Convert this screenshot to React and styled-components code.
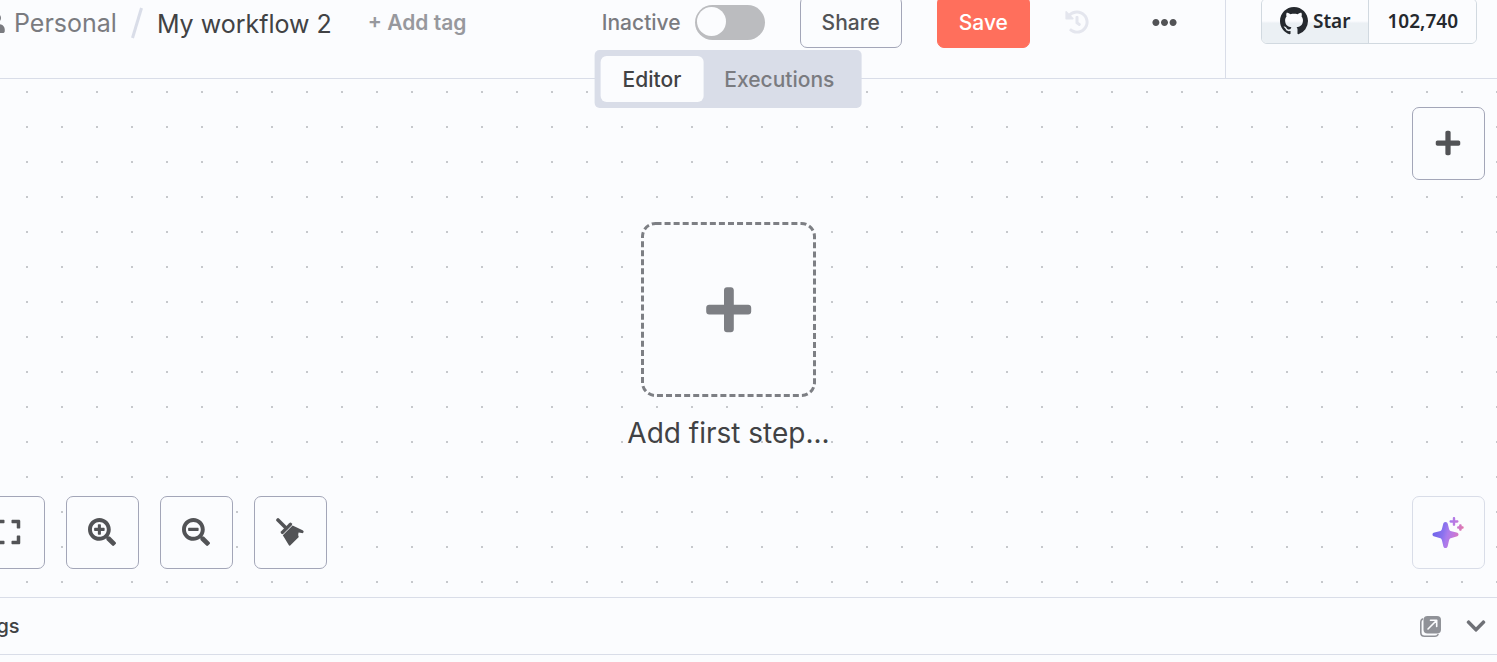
import React from 'react';
import styled, { createGlobalStyle } from 'styled-components';
import {
  FaChevronDown,
  FaEllipsisH,
  FaExpand,
  FaHistory,
  FaPlus,
  FaSearchMinus,
  FaSearchPlus,
  FaUser,
} from 'react-icons/fa';

const GlobalStyle = createGlobalStyle`
  *, *::before, *::after { box-sizing: border-box; }
  body {
    margin: 0;
    overflow-x: hidden;
    background: #fbfcfe;
    color: #414244;
    font-family: Inter, "Liberation Sans", sans-serif;
  }
  button, input { font: inherit; margin: 0; }
  svg { display: block; flex: none; }
`;

const Viewport = styled.div`
  overflow: hidden;
`;

/* The workspace runs on past the left edge of the window. */
const Workspace = styled.div`
  display: flex;
  flex-direction: column;
  min-height: 100vh;
  margin-left: -41px;
  padding-bottom: 7px;
`;

const Header = styled.header`
  position: relative;
  display: flex;
  border-bottom: 1px solid #d9dde8;
`;

const HeaderMain = styled.div`
  flex: 1;
  display: flex;
  align-items: center;
  height: 78px;
  padding: 0 48px 34px 27px;
  border-right: 1px solid #d9dde8;
  white-space: nowrap;
`;

const HeaderAside = styled.div`
  display: flex;
  align-items: flex-end;
  height: 78px;
  padding: 0 20px 34px 35px;
`;

const Crumbs = styled.nav`
  display: flex;
  align-items: center;
  padding-top: 2px;
  font-size: 25px;
  line-height: 32px;
`;

const CrumbLink = styled.a`
  display: flex;
  align-items: center;
  gap: 8px;
  color: #7a7b80;
  text-decoration: none;
`;

const Slash = styled.svg`
  margin: 0 14px;
`;

const WorkflowName = styled.h1`
  margin: 0;
  padding-top: 2px;
  font-size: 25px;
  line-height: 32px;
  font-weight: 400;
`;

const PlainButton = styled.button`
  display: flex;
  align-items: center;
  justify-content: center;
  padding: 0;
  border: 0;
  background: none;
  color: ${(p) => p.$color};
  cursor: pointer;
`;

const AddTag = styled(PlainButton)`
  margin-left: 36px;
  padding-top: 2px;
  font-size: 21px;
  line-height: 28px;
  font-weight: 600;
`;

const Actions = styled.div`
  display: flex;
  align-items: center;
  gap: 35px;
  margin-left: auto;
`;

const ActiveLabel = styled.label`
  display: flex;
  align-items: center;
  gap: 14px;
  color: #7a7b80;
  font-size: 21px;
  line-height: 28px;
  font-weight: 500;
`;

const LabelText = styled.span`
  padding-top: 2px;
`;

const Switch = styled.input`
  appearance: none;
  width: 70px;
  height: 35px;
  border-radius: 18px;
  background: #bbbcbf;
  padding: 2px;
  cursor: pointer;

  &::before {
    content: '';
    display: block;
    width: 29px;
    height: 29px;
    border-radius: 50%;
    background: #fbfcfe;
  }
`;

const Button = styled.button`
  height: 52px;
  padding: 2px 21px 0;
  border: 1px solid ${(p) => (p.$primary ? '#ff6f5c' : '#a3a6b8')};
  border-radius: 7px;
  background: ${(p) => (p.$primary ? '#ff6f5c' : '#fbfcfe')};
  color: ${(p) => (p.$primary ? '#ffffff' : '#525356')};
  font-size: 21px;
  line-height: 28px;
  font-weight: 500;
  cursor: pointer;
`;

const MenuButton = styled(PlainButton)`
  margin-left: 28px;
`;

const Tabs = styled.div`
  position: absolute;
  top: 50px;
  left: 50%;
  transform: translateX(-50%);
  display: flex;
  padding: 6px;
  border-radius: 5px;
  background: #d9dde8;
`;

const Tab = styled.button`
  height: 46px;
  padding: 2px ${(p) => (p.$active ? 22 : 21)}px 0;
  border: 0;
  border-radius: 6px;
  background: ${(p) => (p.$active ? '#fbfcfe' : 'transparent')};
  color: ${(p) => (p.$active ? '#414244' : '#7a7b80')};
  font-size: 21px;
  line-height: 28px;
  font-weight: 500;
  cursor: pointer;
`;

const Stars = styled.div`
  display: flex;
  height: 46px;
  border: 1px solid #d1d9e0;
  border-radius: 6px;
  overflow: hidden;
  font-family: "Noto Sans", "Open Sans", sans-serif;
  font-size: 19px;
  line-height: 28px;
  font-weight: 600;
`;

const StarLink = styled.a`
  display: flex;
  align-items: center;
  gap: 5px;
  padding: 0 18px;
  background: ${(p) => (p.$count ? '#fbfcfe' : 'linear-gradient(#fbfcfe 50%, #ebf0f4 55%)')};
  border-left: ${(p) => (p.$count ? '1px solid #d1d9e0' : '0')};
  color: #25292e;
  text-decoration: none;
`;

const Canvas = styled.main`
  flex: 1;
  display: flex;
  flex-direction: column;
  justify-content: space-between;
  padding: 28px 12px 28px 13px;
  background-image: conic-gradient(from 270deg at 2px 2px, #c6c8cc 90deg, transparent 0);
  background-size: 35px 35px;
  background-position: 32px 12px;
`;

const CanvasRow = styled.div`
  display: flex;
  justify-content: ${(p) => (p.$end ? 'flex-end' : 'space-between')};
`;

const Controls = styled.div`
  display: flex;
  gap: 21px;
`;

const IconButton = styled.button`
  display: flex;
  align-items: center;
  justify-content: center;
  width: 73px;
  height: 73px;
  padding: 0 1px 1px 0;
  border: 1px solid ${(p) => (p.$soft ? '#d9dde8' : '#a3a6b8')};
  border-radius: 7px;
  background: #fbfcfe;
  color: #525356;
  cursor: pointer;
`;

const FirstStep = styled.div`
  display: flex;
  flex-direction: column;
  align-items: center;
  gap: 14px;
`;

const StepButton = styled.button`
  display: block;
  padding: 0;
  border: 0;
  border-radius: 14px;
  background: #fbfcfe;
  cursor: pointer;
`;

const StepLabel = styled.div`
  font-size: 28px;
  line-height: 44px;
  font-weight: 400;
`;

const LogsBar = styled.footer`
  display: flex;
  align-items: center;
  justify-content: space-between;
  height: 58px;
  padding: 0 10px 0 14px;
  border-top: 1px solid #d9dde8;
  border-bottom: 1px solid #d9dde8;
`;

const LogsTitle = styled.h2`
  margin: 0;
  font-size: 20px;
  line-height: 28px;
  font-weight: 500;
`;

const LogsActions = styled.div`
  display: flex;
  align-items: center;
  gap: 24px;
`;

const GithubMark = () => (
  <svg width="28" height="28" viewBox="0 0 16 16" fill="currentColor" aria-hidden="true">
    <path d="M8 0C3.58 0 0 3.58 0 8c0 3.54 2.29 6.53 5.47 7.59.4.07.55-.17.55-.38 0-.19-.01-.82-.01-1.49-2.01.37-2.53-.49-2.69-.94-.09-.23-.48-.94-.82-1.13-.28-.15-.68-.52-.01-.53.63-.01 1.08.58 1.23.82.72 1.21 1.87.87 2.33.66.07-.52.28-.87.51-1.07-1.78-.2-3.64-.89-3.64-3.95 0-.87.31-1.59.82-2.15-.08-.2-.36-1.02.08-2.12 0 0 .67-.21 2.2.82.64-.18 1.32-.27 2-.27.68 0 1.36.09 2 .27 1.53-1.04 2.2-.82 2.2-.82.44 1.1.16 1.92.08 2.12.51.56.82 1.27.82 2.15 0 3.07-1.87 3.75-3.65 3.95.29.25.54.73.54 1.48 0 1.07-.01 1.93-.01 2.2 0 .21.15.46.55.38A8.013 8.013 0 0016 8c0-4.42-3.58-8-8-8z" />
  </svg>
);

const BroomIcon = () => (
  <svg width="28" height="28" viewBox="0 0 28 28" aria-hidden="true">
    <path d="M2 2l8 8" stroke="currentColor" strokeWidth="3.6" strokeLinecap="round" />
    <path d="M6.400 14.400l8-8" stroke="currentColor" strokeWidth="3.400" strokeLinecap="round" />
    <path
      d="M16.600 7.400L26.600 12.200c1 .5 1.300 1.300.9 2.100-.4.8-1.100 1-1.900.8l-3-.6c-.6 2-.4 3.300.2 4.600L14.200 27.400c-.5.500-1 .4-1.300-.1L6.800 17.200z"
      fill="currentColor"
    />
  </svg>
);

const SparkleIcon = () => (
  <svg width="32" height="32" viewBox="0 0 32 32" aria-hidden="true">
    <defs>
      <linearGradient id="sparkle" gradientUnits="userSpaceOnUse" x1="1" y1="12" x2="31" y2="20">
        <stop offset="0" stopColor="#6b62ea" />
        <stop offset="0.36" stopColor="#8b72ee" />
        <stop offset="0.5" stopColor="#aa7bec" />
        <stop offset="0.7" stopColor="#c278dc" />
        <stop offset="1" stopColor="#e8779f" />
      </linearGradient>
    </defs>
    <g fill="url(#sparkle)">
      <path d="M13.500 6c1.300 0 2 .9 2.300 2.100l1.200 4.600c.4 1.500 1 2.100 2.500 2.500l5 1.300c1.300.3 2 1 2 2s-.7 1.700-2 2l-5 1.500c-1.500.4-2.100 1-2.500 2.500l-1.200 5.200c-.3 1.400-1 2.300-2.300 2.300s-2-.9-2.300-2.300L10 24.500c-.4-1.500-1-2.100-2.500-2.500l-5-1.500c-1.300-.3-2-1-2-2s.7-1.700 2-2l5-1.300c1.500-.4 2.100-1 2.500-2.500l1.200-4.600C11.500 6.900 12.200 6 13.500 6z" />
      <path d="M22 1c.7 0 1.200.5 1.200 1.200v2.100h2.100c.7 0 1.200.5 1.200 1.200s-.5 1.200-1.200 1.200h-2.100v2.100c0 .7-.5 1.200-1.200 1.200s-1.200-.5-1.200-1.200V6.700h-2.100c-.7 0-1.200-.5-1.200-1.200s.5-1.200 1.200-1.200h2.100V2.200C20.800 1.500 21.300 1 22 1z" />
      <path d="M28.400 8.200c.8 0 1.300.5 1.300 1.300v.7h.7c.8 0 1.300.5 1.300 1.300s-.5 1.300-1.300 1.300h-.7v.7c0 .8-.5 1.300-1.300 1.300s-1.300-.5-1.300-1.300v-.7h-.7c-.8 0-1.300-.5-1.300-1.300s.5-1.300 1.300-1.300h.7v-.7c0-.8.5-1.300 1.300-1.300z" />
    </g>
  </svg>
);

const PopOutIcon = () => (
  <svg width="21" height="21" viewBox="0 0 21 21" fill="none" aria-hidden="true">
    <rect x="3.500" y="0" width="17.500" height="17.500" rx="4" fill="currentColor" />
    <path d="M2.500 3C1.300 3.700.8 4.600.8 6v10.500c0 2.300 1.400 3.700 3.700 3.700H15c1.300 0 2.300-.5 3-1.600" stroke="currentColor" strokeWidth="1.600" strokeLinecap="round" />
    <path d="M8 13l8.500-8.500M10.500 4.300h6.200v6.200" stroke="#fbfcfe" strokeWidth="1.600" strokeLinecap="round" strokeLinejoin="round" />
  </svg>
);

const StepFrame = () => (
  <svg width="175" height="175" viewBox="0 0 175 175" aria-hidden="true">
    <rect x="1.500" y="1.500" width="172" height="172" rx="13" fill="none" stroke="#7d7f84" strokeWidth="3" strokeDasharray="6 3.060" />
    <g transform="translate(65 65) scale(0.1)" fill="#7d7f84">
      <path d="M416 177H278V32c0-18-12-30-30-30h-38c-18 0-30 12-30 30v145H32c-18 0-30 12-30 30v38c0 18 12 30 30 30h148v147c0 18 12 30 30 30h38c18 0 30-12 30-30V275h144c18 0 30-12 30-30v-38c0-18-12-30-30-30z" />
    </g>
  </svg>
);

export default function App() {
  return (
    <Viewport>
      <GlobalStyle />
      <Workspace>
        <Header>
          <HeaderMain>
            <Crumbs aria-label="Breadcrumb">
              <CrumbLink href="#personal">
                <FaUser size={20} />
                Personal
              </CrumbLink>
              <Slash width="12" height="32" viewBox="0 0 12 32" aria-hidden="true">
                <path d="M1.500 31L10.500 1" stroke="#d9dde8" strokeWidth="3" />
              </Slash>
              <WorkflowName>My workflow 2</WorkflowName>
            </Crumbs>
            <AddTag type="button" $color="#97989d">+ Add tag</AddTag>
            <Actions>
              <ActiveLabel>
                <LabelText>Inactive</LabelText>
                <Switch type="checkbox" role="switch" />
              </ActiveLabel>
              <Button type="button">Share</Button>
              <Button type="button" $primary>Save</Button>
              <PlainButton type="button" $color="#e4e6ee" aria-label="Workflow history">
                <FaHistory size={24} />
              </PlainButton>
              <MenuButton type="button" $color="#525356" aria-label="More actions">
                <FaEllipsisH size={25} />
              </MenuButton>
            </Actions>
          </HeaderMain>
          <HeaderAside>
            <Stars>
              <StarLink href="#star">
                <GithubMark />
                Star
              </StarLink>
              <StarLink href="#stargazers" $count>102,740</StarLink>
            </Stars>
          </HeaderAside>
          <Tabs role="tablist">
            <Tab type="button" role="tab" aria-selected="true" $active>Editor</Tab>
            <Tab type="button" role="tab" aria-selected="false">Executions</Tab>
          </Tabs>
        </Header>

        <Canvas>
          <CanvasRow $end>
            <IconButton type="button" aria-label="Add node">
              <FaPlus size={28} />
            </IconButton>
          </CanvasRow>
          <FirstStep>
            <StepButton type="button" aria-labelledby="first-step">
              <StepFrame />
            </StepButton>
            <StepLabel id="first-step">Add first step...</StepLabel>
          </FirstStep>
          <CanvasRow>
            <Controls>
              <IconButton type="button" aria-label="Zoom to fit"><FaExpand size={28} /></IconButton>
              <IconButton type="button" aria-label="Zoom in"><FaSearchPlus size={28} /></IconButton>
              <IconButton type="button" aria-label="Zoom out"><FaSearchMinus size={28} /></IconButton>
              <IconButton type="button" aria-label="Tidy up"><BroomIcon /></IconButton>
            </Controls>
            <IconButton type="button" $soft aria-label="Assistant"><SparkleIcon /></IconButton>
          </CanvasRow>
        </Canvas>

        <LogsBar>
          <LogsTitle>Logs</LogsTitle>
          <LogsActions>
            <PlainButton type="button" $color="#909298" aria-label="Pop out logs"><PopOutIcon /></PlainButton>
            <PlainButton type="button" $color="#6f7177" aria-label="Open panel"><FaChevronDown size={22} /></PlainButton>
          </LogsActions>
        </LogsBar>
      </Workspace>
    </Viewport>
  );
}
